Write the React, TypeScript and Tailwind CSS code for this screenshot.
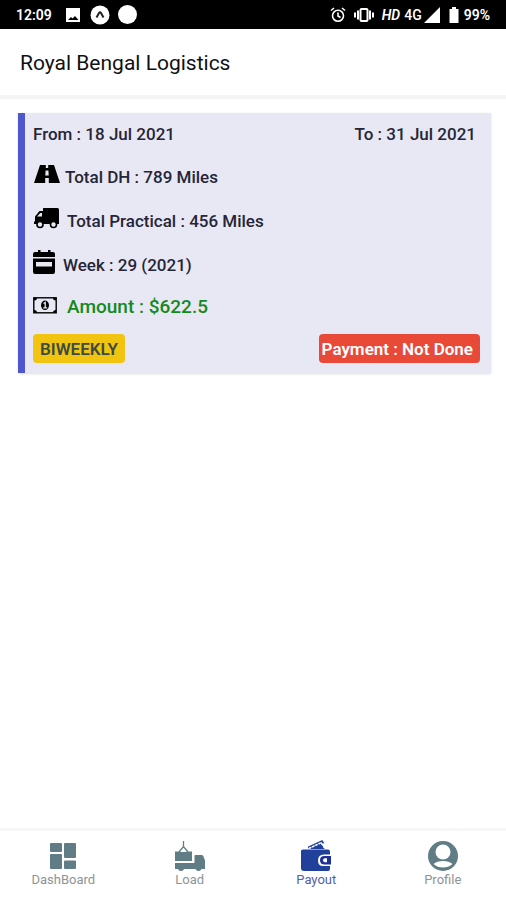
import type { ReactNode } from "react";

function StatusBar() {
  return (
    <div className="flex h-[29px] items-center justify-between bg-black px-4 text-sm font-semibold text-white">
      <div className="flex items-center gap-3">
        <span className="w-9">12:09</span>
        <div className="flex items-center gap-2">
          <svg className="size-[18px]" viewBox="0 0 18 18" fill="#fff">
            <path fillRule="evenodd" d="M2 2h14v14H2zM4 14h10.500l-3.500-4-2.500 2.500-1.500-1.500z" />
          </svg>
          <svg className="size-5" viewBox="0 0 20 20">
            <circle cx="10" cy="10" r="9.500" fill="#fff" />
            <path d="M6.500 12.500L9 8q1-1.500 2 0l2.500 4.500" fill="none" stroke="#222" strokeWidth="2" />
          </svg>
          <span className="size-[19px] rounded-full bg-white" />
        </div>
      </div>
      <div className="flex items-center gap-2">
        <svg className="size-4" viewBox="0 0 16 16" fill="none" stroke="#fff" strokeWidth="1.600">
          <circle cx="8" cy="8.800" r="5.500" />
          <path d="M1 3.500l3-2.500M15 3.500L12 1M8 5.500V9l2.500 1.500" />
        </svg>
        <svg className="h-4 w-5" viewBox="0 0 20 16" fill="none" stroke="#fff" strokeWidth="2">
          <rect x="6.500" y="2" width="7" height="12" rx="1" />
          <path d="M4 3.500v9M16 3.500v9M1 5.500v5M19 5.500v5" />
        </svg>
        <div className="flex items-center gap-0.5">
          <span className="mr-0.5 italic">HD</span>
          <span className="font-medium">4G</span>
          <svg className="size-4" viewBox="0 0 16 16" fill="#fff">
            <path d="M16 0v16H0z" />
          </svg>
        </div>
        <div className="flex items-center gap-1">
          <svg className="h-4 w-3" viewBox="0 0 12 16" fill="#fff">
            <path d="M4 0h4v2h2.500v14h-9V2H4z" />
          </svg>
          <span>99%</span>
        </div>
      </div>
    </div>
  );
}

function RoadIcon() {
  return (
    <svg className="h-5 w-7" viewBox="0 0 28 20">
      <path d="M7 1h5.800v3h2.400V1H21l6 18H15.800v-5h-3.600v5H1z" />
      <path d="M12.600 6.500h2.800l.3 5h-3.400z" fill="#e8e8f4" />
    </svg>
  );
}

function TruckIcon() {
  return (
    <svg className="h-[22px] w-7" viewBox="0 0 28 22">
      <path d="M10 1h14.500q1.500 0 1.500 1.500V17H1v-2.500h1V9.500L6.500 4H10z" />
      <path d="M4 9.500L7.300 6H9v3.500z" fill="#e8e8f4" />
      <circle cx="7" cy="17.500" r="3" fill="#e8e8f4" stroke="#000" strokeWidth="1.600" />
      <circle cx="20.500" cy="17.500" r="3" fill="#e8e8f4" stroke="#000" strokeWidth="1.600" />
    </svg>
  );
}

function CalendarIcon() {
  return (
    <svg className="size-6" viewBox="0 0 24 24">
      <path d="M5 0h2.500v2H15V0h2.500v2H20q2 0 2 2v3H0V4q0-2 2-2h3z" />
      <path fillRule="evenodd" d="M0 8.500h22V22q0 2-2 2H2q-2 0-2-2zM3 12v4.500h16V12z" />
    </svg>
  );
}

function CashIcon() {
  return (
    <svg className="h-5 w-7" viewBox="0 0 28 20">
      <rect x=".8" y="1.800" width="22.400" height="15" fill="none" stroke="#000" strokeWidth="1.400" />
      <path d="M1 2h3q0 2.500-3 2.500zM23 2h-3q0 2.500 3 2.500zM1 16.500h3q0-2.500-3-2.500zM23 16.500h-3q0-2.500 3-2.500z" />
      <ellipse cx="12" cy="9.300" rx="4" ry="4.800" />
      <path d="M10.500 7.500l1.700-1v5M10.200 11.800h4" fill="none" stroke="#e8e8f4" strokeWidth="1.300" />
    </svg>
  );
}

function DashboardIcon() {
  return (
    <svg className="size-7" viewBox="0 0 28 28" fill="#607d86">
      <rect x="1" y="1" width="12" height="9" rx="1" />
      <rect x="15" y="1" width="12" height="15" rx="1" />
      <rect x="1" y="12" width="12" height="15" rx="1" />
      <rect x="15" y="18.500" width="12" height="8.500" rx="1" />
    </svg>
  );
}

function LoadIcon() {
  return (
    <svg className="size-8" viewBox="0 0 32 32" fill="#607d86">
      <path d="M1 11.500h17V21H1z" />
      <path d="M9.500 7l-3.500 5h7z" fill="#fff" />
      <path d="M9.500 1v5.500M5 12l4.500-5.500L14 12" fill="none" stroke="#607d86" strokeWidth="1.300" />
      <path d="M1 23h19.500v-7q0-1 1-1H28q1 0 1.500 1.500l1.500 4V29H1z" />
      <path d="M4 28h6q0 3-3 3t-3-3zM21.500 28h6q0 3-3 3t-3-3z" />
    </svg>
  );
}

function WalletIcon() {
  return (
    <svg className="size-8" viewBox="0 0 32 32">
      <path d="M8 9l12.500-6.500L25 9z" fill="#21409a" />
      <path d="M8 7.500L22 1l1.500 2.500" fill="none" stroke="#21409a" strokeWidth="1.500" />
      <path d="M9 8.500L21 2.800l4 5.700" fill="none" stroke="#fff" strokeWidth="1.500" strokeDasharray="2.500 1" />
      <path d="M3 9.500h25q2 0 2 2V29q0 2-2 2H4q-3 0-3-3V11q0-1.500 2-1.500z" fill="#21409a" />
      <path d="M32 14.500H24q-6 0-6 6t6 5.500h8z" fill="#fff" />
      <path d="M31 16h-6.500q-4.500 0-4.500 4.200t4.500 4.300H31z" fill="#1c2f96" />
      <path d="M27 18.200v4h-2q-2 0-2-2t2-2z" fill="#fff" />
    </svg>
  );
}

function ProfileIcon() {
  return (
    <svg className="size-8" viewBox="0 0 32 32">
      <circle cx="16" cy="16" r="15" fill="#607d86" />
      <circle cx="16" cy="12" r="7.500" fill="#fff" />
      <path d="M6.500 24q3.500-3 9.500-3t9.500 3q-4 3.500-9.500 3.500T6.500 24z" fill="#fff" />
    </svg>
  );
}

function Row({ icon, children }: { icon: ReactNode; children: ReactNode }) {
  return (
    <div className="flex h-11 items-center">
      {icon}
      <span className="pt-1.5">{children}</span>
    </div>
  );
}

function PayoutCard() {
  return (
    <section className="border-l-[7px] border-[#5056cb] bg-[#e8e8f4] pt-[7px] pr-[11px] pb-2.5 pl-2 text-[17px] leading-6 font-medium text-[#252536] shadow">
      <div className="mb-1 flex h-7 items-center justify-between pr-1">
        <span>From : 18 Jul 2021</span>
        <span>To : 31 Jul 2021</span>
      </div>
      <Row icon={<div className="mr-1"><RoadIcon /></div>}>Total DH : 789 Miles</Row>
      <Row icon={<div className="mr-1.5"><TruckIcon /></div>}>Total Practical : 456 Miles</Row>
      <Row icon={<div className="mr-1.5"><CalendarIcon /></div>}>Week : 29 (2021)</Row>
      <div className="flex h-11 items-center text-[19px] text-[#158a1c]">
        <div className="mr-1.5"><CashIcon /></div>
        <span className="pt-0.5">Amount : $622.5</span>
      </div>
      <div className="flex items-center justify-between pt-1.5 leading-[25px] font-semibold">
        <span className="rounded bg-[#f1c40f] px-[7px] pt-[3px] pb-px text-[#3d4a45]">BIWEEKLY</span>
        <span className="rounded bg-[#e84a37] pt-[3px] pr-[7px] pb-px pl-[3px] text-white">Payment : Not Done</span>
      </div>
    </section>
  );
}

function Tab({ icon, label, active }: { icon: ReactNode; label: string; active?: boolean }) {
  return (
    <button
      type="button"
      className={active ? "flex flex-col items-center text-[#5360ad]" : "flex flex-col items-center text-[#8e9498]"}
    >
      <span className="flex h-8 items-center">{icon}</span>
      <span className="text-[13px] leading-4">{label}</span>
    </button>
  );
}

export default function App() {
  return (
    <div className="flex min-h-screen flex-col bg-white font-['Roboto',sans-serif]">
      <StatusBar />
      <header className="flex h-[70px] items-center border-b-4 border-[#f5f5f5] px-5">
        <h1 className="pt-1 text-[21px] text-[#111]">Royal Bengal Logistics</h1>
      </header>
      <main className="flex-1 pt-3.5 pr-[15px] pb-4 pl-[18px]">
        <PayoutCard />
      </main>
      <nav className="grid h-[72px] grid-cols-4 items-start border-t-[3px] border-[#f7f7f7] pt-[9px]">
        <Tab icon={<DashboardIcon />} label="DashBoard" />
        <Tab icon={<LoadIcon />} label="Load" />
        <Tab icon={<WalletIcon />} label="Payout" active />
        <Tab icon={<ProfileIcon />} label="Profile" />
      </nav>
    </div>
  );
}
